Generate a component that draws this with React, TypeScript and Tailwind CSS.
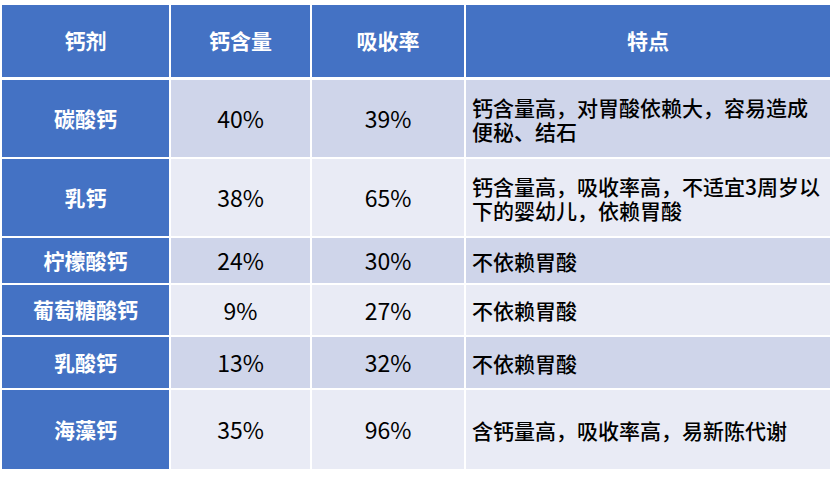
import React from "react";

const font = { fontFamily: '"Noto Sans CJK SC", "Noto Sans", sans-serif' };

type Row = { name: string; c: string; a: string; f: string[]; h: string; dark: boolean };

const rows: Row[] = [
  { name: "碳酸钙", c: "40%", a: "39%", f: ["钙含量高，对胃酸依赖大，容易造成", "便秘、结石"], h: "h-[77px]", dark: true },
  { name: "乳钙", c: "38%", a: "65%", f: ["钙含量高，吸收率高，不适宜3周岁以", "下的婴幼儿，依赖胃酸"], h: "h-[77px]", dark: false },
  { name: "柠檬酸钙", c: "24%", a: "30%", f: ["不依赖胃酸"], h: "h-[45px]", dark: true },
  { name: "葡萄糖酸钙", c: "9%", a: "27%", f: ["不依赖胃酸"], h: "h-[50px]", dark: false },
  { name: "乳酸钙", c: "13%", a: "32%", f: ["不依赖胃酸"], h: "h-[51px]", dark: true },
  { name: "海藻钙", c: "35%", a: "96%", f: ["含钙量高，吸收率高，易新陈代谢"], h: "h-[79px]", dark: false },
];

const cols = "grid grid-cols-[167px_139px_152px_364px] gap-x-[2px]";

export default function App() {
  return (
    <div className="w-[837px] h-[477px] bg-white pt-[5px] pl-[2px]" style={font}>
      <div className={`${cols} h-[72px] mb-[3px]`}>
        {["钙剂", "钙含量", "吸收率", "特点"].map((t) => (
          <div key={t} className="bg-[#4472c4] flex items-center justify-center text-white font-bold text-[21px]">
            {t}
          </div>
        ))}
      </div>
      <div className="flex flex-col gap-y-[2px]">
        {rows.map((r) => {
          const bg = r.dark ? "bg-[#cfd5ea]" : "bg-[#e9ebf5]";
          return (
            <div key={r.name} className={`${cols} ${r.h}`}>
              <div className="bg-[#4472c4] flex items-center justify-center text-white font-bold text-[21px]">{r.name}</div>
              <div className={`${bg} flex items-center justify-center text-black text-[23px]`}>{r.c}</div>
              <div className={`${bg} flex items-center justify-center text-black text-[23px]`}>{r.a}</div>
              <div className={`${bg} flex flex-col justify-center pl-[6px] text-black font-medium text-[21px] leading-[24px] whitespace-nowrap`}>
                {r.f.map((line) => (
                  <div key={line}>{line}</div>
                ))}
              </div>
            </div>
          );
        })}
      </div>
    </div>
  );
}
